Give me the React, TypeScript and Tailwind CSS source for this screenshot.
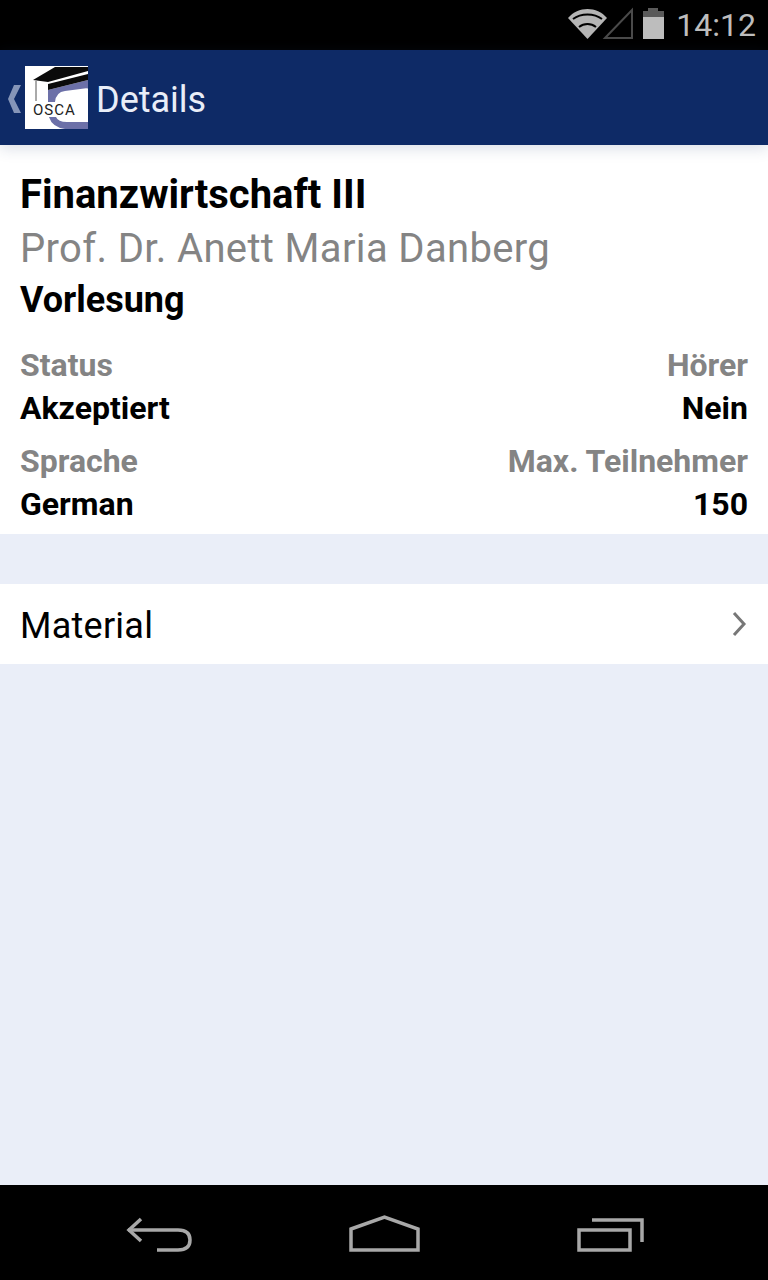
import React from 'react';

const font = { fontFamily: 'Roboto, sans-serif' };

function StatusBar() {
  return (
    <div className="h-[50px] bg-black flex items-center justify-end pr-[12px] shrink-0">
      <svg width="97" height="40" viewBox="0 5 97 40" className="mr-[11px]">
        {/* wifi */}
        <path d="M0 18 C10 6 29 6 39 18 L19.5 39 Z" fill="#b5b5b5" />
        <path d="M5 19 C13 13 26 13 34 19 M11 27 C16 23 23 23 28 27" stroke="#000" strokeWidth="2" fill="none" />
        {/* signal */}
        <path d="M37 38 L64 10 L64 38 Z" fill="none" stroke="#4a4a4a" strokeWidth="2" />
        {/* battery */}
        <rect x="75" y="16" width="21" height="23" fill="#bdbdbd" />
        <rect x="75" y="11" width="21" height="6" fill="#5a5a5a" />
        <rect x="80" y="8" width="10" height="3" fill="#5a5a5a" />
      </svg>
      <span className="text-[32px] leading-none text-[#bdbdbd]">14:12</span>
    </div>
  );
}

function Logo() {
  return (
    <div className="relative w-[63px] h-[63px] bg-white overflow-hidden shrink-0">
      <svg width="63" height="63" viewBox="0 0 63 63" className="absolute inset-0">
        <path d="M23 24 L63 14 V63 H40 Q27 61 24 51 L31 51 Q33 56 42 56 H63 V22 L40 25 Q31 26 30 36 H23 Z" fill="#6c70a8" />
        <path d="M8 14 L30 1 H63 V5 L23 16 Z" fill="#0b0b0b" />
        <path d="M23 18 L63 8 V14 L23 24 Z" fill="#0b0b0b" />
        <path d="M11 15 V35" stroke="#555" strokeWidth="1" />
      </svg>
      <span className="absolute left-[8px] top-[36px] text-[15px] leading-[16px] text-[#222] tracking-[1px]">OSCA</span>
    </div>
  );
}

function Field({ label, value, right }: { label: string; value: string; right?: boolean }) {
  return (
    <div className={right ? 'text-right' : ''}>
      <div className="text-[32px] leading-[43px] font-bold text-[#848484]">{label}</div>
      <div className="text-[32px] leading-[43px] font-bold text-black">{value}</div>
    </div>
  );
}

export default function App() {
  return (
    <div className="w-[768px] h-[1280px] flex flex-col bg-[#eaeef8] overflow-hidden" style={font}>
      <StatusBar />
      <div className="h-[95px] bg-[#0e2a66] flex items-center shrink-0 shadow-[0_3px_14px_rgba(40,60,110,0.18)] z-10">
        <svg width="25" height="40" viewBox="0 0 25 40" className="shrink-0">
          <path d="M21 7 L14 21 L21 35 L14 35 L8 21 L14 7 Z" fill="#8595b8" />
        </svg>
        <Logo />
        <span className="ml-[8px] text-[36px] leading-none text-[#e9eef8] mt-[5px]">Details</span>
      </div>
      <div className="h-[389px] bg-white px-[20px] pt-[25px] shrink-0">
        <div className="text-[40px] leading-[50px] font-bold text-black">Finanzwirtschaft III</div>
        <div className="text-[40px] leading-[58px] text-[#848484] tracking-[0.35px]">Prof. Dr. Anett Maria Danberg</div>
        <div className="text-[36px] leading-[45px] font-bold text-black">Vorlesung</div>
        <div className="mt-[21px] flex justify-between">
          <Field label="Status" value="Akzeptiert" />
          <Field label="Hörer" value="Nein" right />
        </div>
        <div className="mt-[10px] flex justify-between">
          <Field label="Sprache" value="German" />
          <Field label="Max. Teilnehmer" value="150" right />
        </div>
      </div>
      <div className="mt-[50px] h-[80px] bg-white flex items-center justify-between pl-[20px] pr-[21px] shrink-0">
        <span className="text-[36px] leading-none text-black tracking-[0.25px] mt-[4px]">Material</span>
        <svg width="16" height="26" viewBox="0 0 16 26">
          <path d="M3 2 L13 13 L3 24" fill="none" stroke="#777" strokeWidth="3" />
        </svg>
      </div>
      <div className="flex-1" />
      <div className="h-[95px] bg-black shrink-0 pl-[100px]">
        <svg width="570" height="85" viewBox="0 0 570 85" className="mt-[5px]" fill="none" stroke="#a8a8a8" strokeWidth="3.5">
          <path d="M41 29 L29 40 L41 51" />
          <path d="M28 40 H78 Q90 40 90 50 Q90 60 78 60 H57" />
          <path d="M251 39 L284.5 27 L318 39 V60 H251 Z" />
          <path d="M479 40 H530 V60 H479 Z" />
          <path d="M492 30 H542 V52" />
        </svg>
      </div>
    </div>
  );
}
